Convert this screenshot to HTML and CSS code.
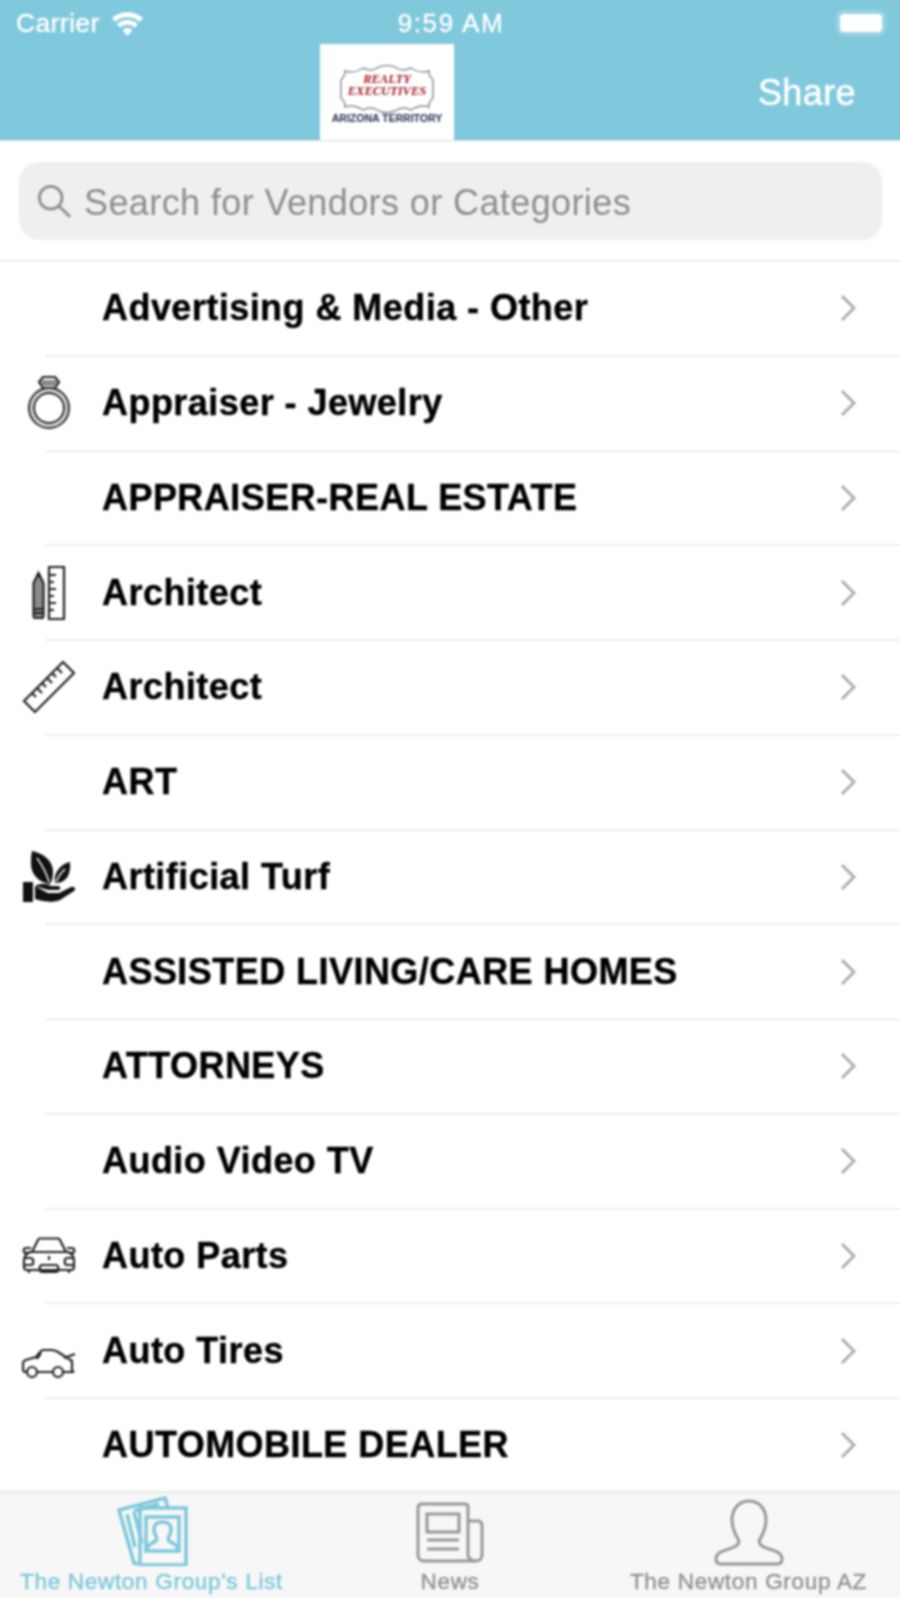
FILE: index.html
```html
<!DOCTYPE html>
<html>
  <head>
    <meta charset="UTF-8" />
    <title>The Newton Group's List</title>
    <link rel="stylesheet" href="styles.css">
  </head>
  <body>
    <header class="top">
      <div class="status">
        <div class="status-left">
          <span>Carrier</span>
          <svg class="wifi" viewBox="0 0 32 26" aria-hidden="true">
            <path d="M16 26l-5-6a8 8 0 0 1 10 0z"></path>
            <path d="M8.500 17.500l-3-3.600a16 16 0 0 1 21 0l-3 3.600a11.500 11.500 0 0 0-15 0z"></path>
            <path d="M3.800 11.800L.5 8a24 24 0 0 1 31 0l-3.300 3.800a19 19 0 0 0-24.400 0z"></path>
          </svg>
        </div>
        <span class="clock">9:59 AM</span>
        <div class="battery"><div class="battery-fill"></div></div>
      </div>
      <div class="nav">
        <div class="logo">
          <svg class="logo-badge" viewBox="0 0 96 52" aria-hidden="true">
            <path d="M6 8C12 10 18 9 24 5C30 8 36 7 40 4Q48 1 56 4C60 7 66 8 72 5C78 9 84 10 90 8C89 12 92 15 94 17V35C92 37 89 40 90 44C84 42 78 43 72 47C66 44 60 45 56 48Q48 51 40 48C36 45 30 44 24 47C18 43 12 42 6 44C7 40 4 37 2 35V17C4 15 7 12 6 8z"></path>
          </svg>
          <div class="logo-words">
            <span>REALTY</span>
            <span>EXECUTIVES</span>
          </div>
          <div class="logo-place">ARIZONA TERRITORY</div>
        </div>
        <span class="share">Share</span>
      </div>
    </header>

    <div class="search-wrap">
      <div class="search">
        <svg class="search-icon" viewBox="0 0 36 36" aria-hidden="true">
          <circle cx="14.500" cy="14.500" r="12"></circle>
          <path d="M23.500 23.500L34 34"></path>
        </svg>
        <span class="search-text">Search for Vendors or Categories</span>
      </div>
    </div>

    <main class="list">
      <div class="row">
        <div class="row-icon"></div>
        <span class="row-text">Advertising &amp; Media - Other</span>
        <svg class="chevron" viewBox="0 0 16 28"><path d="M2 2l12 12L2 26"></path></svg>
      </div>
      <div class="row">
        <div class="row-icon">
          <svg class="icon" viewBox="0 0 52 56" aria-hidden="true">
            <path class="thin" d="M20 2h12l4 5-4 6H20l-4-6z"></path>
            <path class="gray" d="M19 5h14l1 3-2 3H20l-2-3z"></path>
            <circle class="ring" cx="26" cy="33" r="20"></circle>
            <circle class="ring-mid" cx="26" cy="33" r="17.500"></circle>
            <circle class="ring" cx="26" cy="33" r="15"></circle>
          </svg>
        </div>
        <span class="row-text">Appraiser - Jewelry</span>
        <svg class="chevron" viewBox="0 0 16 28"><path d="M2 2l12 12L2 26"></path></svg>
      </div>
      <div class="row">
        <div class="row-icon"></div>
        <span class="row-text">APPRAISER-REAL ESTATE</span>
        <svg class="chevron" viewBox="0 0 16 28"><path d="M2 2l12 12L2 26"></path></svg>
      </div>
      <div class="row">
        <div class="row-icon">
          <svg class="icon" viewBox="0 0 52 56" aria-hidden="true">
            <path class="gray" d="M15.500 9l5 9v33a2 2 0 0 1-2 2h-6a2 2 0 0 1-2-2V18z"></path>
            <path class="thin" d="M15.500 8l5 10v33a2 2 0 0 1-2 2h-6a2 2 0 0 1-2-2V18zM10.500 44h10M10.500 48h10"></path>
            <path class="fill" d="M13.500 12l2-4 2 4z"></path>
            <path class="thin" d="M26 2h15v52H26zM26 10h7M26 17h5M26 24h7M26 31h5M26 38h7M26 45h5"></path>
          </svg>
        </div>
        <span class="row-text">Architect</span>
        <svg class="chevron" viewBox="0 0 16 28"><path d="M2 2l12 12L2 26"></path></svg>
      </div>
      <div class="row">
        <div class="row-icon">
          <svg class="icon icon-wide" viewBox="0 0 54 54" aria-hidden="true">
            <path class="thin" d="M41 2l11 11L13 52 2 41zM35 8l5 5M30 13l4 4M25 18l5 5M20 23l4 4M15 28l5 5M10 33l4 4"></path>
          </svg>
        </div>
        <span class="row-text">Architect</span>
        <svg class="chevron" viewBox="0 0 16 28"><path d="M2 2l12 12L2 26"></path></svg>
      </div>
      <div class="row">
        <div class="row-icon"></div>
        <span class="row-text">ART</span>
        <svg class="chevron" viewBox="0 0 16 28"><path d="M2 2l12 12L2 26"></path></svg>
      </div>
      <div class="row">
        <div class="row-icon">
          <svg class="icon icon-wide" viewBox="0 0 54 54" aria-hidden="true">
            <path class="fill" d="M10 1C20 3 31 10 31 22c0 5-1 9-3 12C18 33 9 25 9 14c0-5 0-9 1-13z"></path>
            <path class="fill" d="M48 12c1 10-2 20-13 21h-2c-2-9 5-19 15-21z"></path>
            <path class="vein" d="M15 8c4 6 9 13 12 24M43 19c-4 4-7 8-9 13"></path>
            <path class="fill" d="M1 32h10v20H1zM13 36c6-3 11-3 16 0h7c3 0 3 4 0 4H26M13 36v13c10 3 18 4 25 1l14-9c3-2 0-5-3-4l-12 6H26"></path>
          </svg>
        </div>
        <span class="row-text">Artificial Turf</span>
        <svg class="chevron" viewBox="0 0 16 28"><path d="M2 2l12 12L2 26"></path></svg>
      </div>
      <div class="row">
        <div class="row-icon"></div>
        <span class="row-text">ASSISTED LIVING/CARE HOMES</span>
        <svg class="chevron" viewBox="0 0 16 28"><path d="M2 2l12 12L2 26"></path></svg>
      </div>
      <div class="row">
        <div class="row-icon"></div>
        <span class="row-text">ATTORNEYS</span>
        <svg class="chevron" viewBox="0 0 16 28"><path d="M2 2l12 12L2 26"></path></svg>
      </div>
      <div class="row">
        <div class="row-icon"></div>
        <span class="row-text">Audio Video TV</span>
        <svg class="chevron" viewBox="0 0 16 28"><path d="M2 2l12 12L2 26"></path></svg>
      </div>
      <div class="row">
        <div class="row-icon">
          <svg class="icon icon-wide icon-short" viewBox="0 0 54 38" aria-hidden="true">
            <path class="thin" d="M10 15l6-12c.4-1 1-1.500 2-1.500h18c1 0 1.600.5 2 1.500l6 12M7 15h40M7 15c-3 2-5 5-5 9v6c0 2 1 3 3 3h44c2 0 3-1 3-3v-6c0-4-2-7-5-9"></path>
            <path class="thin" d="M8 16H4c-3 0-3-5 0-5h5M46 16h4c3 0 3-5 0-5h-5M20 28h14c3 0 3 7 0 7H20c-3 0-3-7 0-7zM2 21h7c3 0 3 7 0 7H2M52 21h-7c-3 0-3 7 0 7h7M7 33v3M47 33v3M27 19v4"></path>
          </svg>
        </div>
        <span class="row-text">Auto Parts</span>
        <svg class="chevron" viewBox="0 0 16 28"><path d="M2 2l12 12L2 26"></path></svg>
      </div>
      <div class="row">
        <div class="row-icon">
          <svg class="icon icon-wide icon-car" viewBox="0 0 54 30" aria-hidden="true">
            <path class="thin" d="M5 24H3c-1.500 0-2-1-2-3v-6c0-2 2-3 6-4l7-2 5-6c1-1 2-1 3-1h8c2 0 4 1 6 2l14 9M42 10l11-4M50 12v11l2 1H41M31 24H15M19 5l-4 6"></path>
            <circle class="thin" cx="10" cy="24" r="5"></circle>
            <circle class="thin" cx="36" cy="24" r="5"></circle>
          </svg>
        </div>
        <span class="row-text">Auto Tires</span>
        <svg class="chevron" viewBox="0 0 16 28"><path d="M2 2l12 12L2 26"></path></svg>
      </div>
      <div class="row">
        <div class="row-icon"></div>
        <span class="row-text">AUTOMOBILE DEALER</span>
        <svg class="chevron" viewBox="0 0 16 28"><path d="M2 2l12 12L2 26"></path></svg>
      </div>
    </main>

    <nav class="tabs">
      <div class="tab tab-active">
        <svg class="tab-icon" viewBox="0 0 72 70" aria-hidden="true">
          <path d="M22 68l-4-1L3 14 49 2l3 10"></path>
          <path d="M24 12h46v57H24z"></path>
          <path d="M11 18l8 33M18 16l8 31M18 15l25-7"></path>
          <path d="M30 21h33v34H30z"></path>
          <path d="M31 53c1-5 6-6 9-8 1-2 1-3 0-5-2-3-2-5-2-7 0-5 4-7 8.500-7s8.500 2 8.500 7c0 2 0 4-2 7-1 2-1 3 0 5 3 2 8 3 9 8"></path>
        </svg>
        <span>The Newton Group's List</span>
      </div>
      <div class="tab">
        <svg class="tab-icon tab-icon-thin" viewBox="0 0 72 70" aria-hidden="true">
          <path d="M54 25h10c3 0 4 2 4 5v29c0 4-3 6-6 6s-8-2-8-6V11c0-2-1-3-3-3H8C5 8 4 10 4 12v47c0 3 2 6 5 6h53"></path>
          <path d="M13 18h32v18H13zM13 44h32M13 53h32"></path>
        </svg>
        <span>News</span>
      </div>
      <div class="tab">
        <svg class="tab-icon tab-icon-thin" viewBox="0 0 72 70" aria-hidden="true">
          <path d="M36 5c-11 0-17 9-17 19 0 8 3 14 6 19 2 4 0 6-4 8-6 3-18 4-18 12 0 4 2 5 5 5h56c3 0 5-1 5-5 0-8-12-9-18-12-4-2-6-4-4-8 3-5 6-11 6-19 0-10-6-19-17-19z"></path>
        </svg>
        <span>The Newton Group AZ</span>
      </div>
    </nav>
  </body>
</html>
```

FILE: styles.css
```css
html {
  overflow: hidden;
  height: 1598px;
}

/* 4px bleed on every side so the blur does not fade out at the window edge */
body {
  width: 908px;
  height: 1606px;
  margin: -4px;
  padding: 0;
  display: flex;
  flex-direction: column;
  overflow: hidden;
  background-color: #ffffff;
  font-family: "Liberation Sans", Arial, sans-serif;
  color: #000000;
  filter: blur(0.8px);
}

/* Header */
.top {
  height: 144px;
  flex: none;
  box-sizing: content-box;
  padding: 0 4px;
  background-color: #80c9dc;
  border-bottom: 1px solid #d8dcdd;
  color: #ffffff;
  display: flex;
  flex-direction: column;
}

.status {
  height: 48px;
  box-sizing: border-box;
  padding: 6px 14px 0 16px;
  display: grid;
  grid-template-columns: 1fr auto 1fr;
  align-items: center;
  font-size: 26px;
  letter-spacing: 0.6px;
  -webkit-text-stroke: 0.3px #ffffff;
}

.status-left {
  display: flex;
  align-items: center;
  gap: 11px;
}

.wifi {
  width: 33px;
  height: 26px;
  fill: #ffffff;
}

.clock {
  letter-spacing: 1.600px;
}

.battery {
  justify-self: end;
  width: 50px;
  height: 26px;
  padding: 4px;
  box-sizing: border-box;
  border-radius: 8px;
  background-color: #9ad3e2;
}

.battery-fill {
  height: 100%;
  border-radius: 4px;
  background-color: #ffffff;
}

.nav {
  flex: 1;
  display: flex;
  align-items: stretch;
  padding-left: 320px;
}

.logo {
  width: 134px;
  background-color: #ffffff;
  display: flex;
  flex-direction: column;
  align-items: center;
  position: relative;
}

.logo-badge {
  position: absolute;
  top: 19px;
  left: 19px;
  width: 96px;
  height: 52px;
  fill: none;
  stroke: #8a8f98;
  stroke-width: 1.500;
}

.logo-words {
  margin-top: 29px;
  display: flex;
  flex-direction: column;
  align-items: center;
  font-family: "Liberation Serif", serif;
  font-style: italic;
  font-weight: bold;
  font-size: 12.500px;
  line-height: 12px;
  color: #a8202c;
  position: relative;
}

.logo-place {
  margin-top: 15px;
  font-size: 10.500px;
  font-weight: bold;
  color: #2a3558;
  white-space: nowrap;
}

.share {
  margin-left: auto;
  margin-right: 44px;
  padding-top: 2px;
  align-self: center;
  font-size: 36px;
  letter-spacing: 0.4px;
  -webkit-text-stroke: 0.5px #ffffff;
}

/* Search */
.search-wrap {
  height: 121px;
  flex: none;
  box-sizing: border-box;
  padding: 21px 22px 0 23px;
  border-bottom: 2px solid #efeff0;
}

.search {
  height: 78px;
  padding: 0 18px;
  display: flex;
  align-items: center;
  gap: 13px;
  border-radius: 20px;
  background-color: #efefef;
  color: #8e8e90;
  font-size: 36px;
  letter-spacing: 0.4px;
}

.search-text {
  padding-top: 3px;
}

.search-icon {
  width: 34px;
  height: 34px;
  fill: none;
  stroke: #8e8e90;
  stroke-width: 3;
  stroke-linecap: round;
}

/* List */
.list {
  flex: 1;
  min-height: 0;
  overflow: hidden;
  padding: 0 4px;
}

.row {
  height: 94.750px;
  box-sizing: border-box;
  padding-bottom: 2px;
  display: flex;
  align-items: center;
  position: relative;
}

.row::after {
  content: "";
  position: absolute;
  left: 45px;
  right: 0;
  bottom: 0;
  height: 2px;
  background-color: #efeff0;
}

.row:last-child::after {
  display: none;
}

.row-icon {
  width: 102px;
  flex: none;
  display: flex;
  justify-content: center;
  padding-right: 4px;
  box-sizing: border-box;
}

.row-text {
  flex: 1;
  font-size: 36px;
  font-weight: bold;
  letter-spacing: 0.45px;
  -webkit-text-stroke: 0.4px #000000;
  white-space: nowrap;
}

.chevron {
  width: 16px;
  height: 28px;
  margin-right: 44px;
  fill: none;
  stroke: #adadaf;
  stroke-width: 3;
}

.icon {
  width: 52px;
  height: 56px;
  display: block;
}

.icon-wide {
  width: 54px;
  height: 54px;
}

.icon-short {
  height: 38px;
}

.icon-car {
  height: 30px;
  margin-top: 24px;
}

.icon .thin {
  fill: none;
  stroke: #222222;
  stroke-width: 2.200;
}

.icon .ring {
  fill: none;
  stroke: #222222;
  stroke-width: 2;
}

.icon .ring-mid {
  fill: none;
  stroke: #999999;
  stroke-width: 1;
}

.icon .gray {
  fill: #8a8a8a;
}

.icon .fill {
  fill: #111111;
}

.icon .vein {
  fill: none;
  stroke: #ffffff;
  stroke-width: 1.500;
}

/* Tabs */
.tabs {
  height: 111px;
  flex: none;
  box-sizing: border-box;
  padding: 0 4px 4px;
  display: grid;
  grid-template-columns: 303px 294px 303px;
  border-top: 2px solid #e6e6e6;
  background-color: #f7f7f7;
}

.tab {
  display: flex;
  flex-direction: column;
  align-items: center;
  font-size: 22.500px;
  letter-spacing: 0.7px;
  color: #929292;
  white-space: nowrap;
  -webkit-text-stroke: 0.4px currentColor;
}

.tab-icon {
  width: 72px;
  height: 70px;
  margin-top: 3px;
  margin-bottom: 3px;
  fill: none;
  stroke: #7dc8dc;
  stroke-width: 3.500;
}

.tab-icon-thin {
  stroke: #979797;
  stroke-width: 3;
}

.tab-active {
  color: #7dc8dc;
}
```
